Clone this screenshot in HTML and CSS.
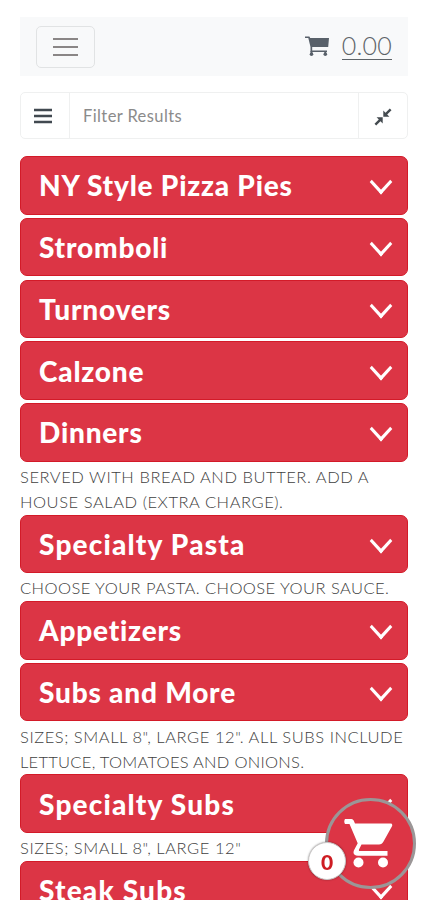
FILE: index.html
```html
<!DOCTYPE html>
<html lang="en">
<head>
  <meta charset="UTF-8" />
  <meta name="viewport" content="width=device-width, initial-scale=1.0"/>
  <title>Menu</title>
  <link rel="stylesheet" href="styles.css">
</head>
<body>

  <!-- Top bar -->
  <header class="navbar">
    <button class="toggler" aria-label="Menu">
      <svg width="25" height="20" viewBox="0 0 25 20"><path d="M0 2h25M0 10h25M0 18h25" stroke="#8a8686" stroke-width="2" /></svg>
    </button>
    <a class="total" href="#">
      <svg width="24" height="21" viewBox="0 0 24 21" fill="#59616a">
        <path d="M0 .5h4.400l.8 1.500H24l-.8 9H7.200v3.500H22V16H5.500V11L3.300 2H0z"/>
        <circle cx="6.500" cy="18.300" r="1.800"/><circle cx="20.300" cy="18.300" r="1.800"/>
        <path d="M5.500 15h2v3h-2zM19.300 15h2v3h-2z"/>
      </svg>
      <span>0.00</span>
    </a>
  </header>

  <!-- Filter -->
  <div class="filter">
    <button class="filter-btn" aria-label="Categories">
      <svg width="18" height="16" viewBox="0 0 18 16"><path d="M0 2h18M0 8h18M0 14h18" stroke="#414950" stroke-width="2.500"/></svg>
    </button>
    <input type="text" placeholder="Filter Results">
    <button class="filter-btn collapse" aria-label="Collapse">
      <svg width="18" height="18" viewBox="0 0 18 18" fill="#444b50">
        <path d="M9.300 2.600v6.100h6.100l-2.200-2.200 4.300-4.300L15.800.5l-4.300 4.300zM8.700 15.400V9.300H2.600l2.200 2.200-4.300 4.300 1.700 1.700 4.300-4.300z"/>
      </svg>
    </button>
  </div>

  <!-- Categories -->
  <main class="menu">
    <button class="category"><span>NY Style Pizza Pies</span><i class="chevron"></i></button>
    <button class="category"><span>Stromboli</span><i class="chevron"></i></button>
    <button class="category"><span>Turnovers</span><i class="chevron"></i></button>
    <button class="category"><span>Calzone</span><i class="chevron"></i></button>
    <button class="category"><span>Dinners</span><i class="chevron"></i></button>
    <p>SERVED WITH BREAD AND BUTTER. ADD A<br>HOUSE SALAD (EXTRA CHARGE).</p>
    <button class="category wide"><span>Specialty Pasta</span><i class="chevron"></i></button>
    <p><span class="snug">CHOOSE YOUR PASTA. CHOOSE YOUR SAUCE.</span></p>
    <button class="category"><span>Appetizers</span><i class="chevron"></i></button>
    <button class="category"><span>Subs and More</span><i class="chevron"></i></button>
    <p>SIZES; SMALL 8", LARGE 12". ALL SUBS INCLUDE<br><span class="tight">LETTUCE, TOMATOES AND ONIONS.</span></p>
    <button class="category wide"><span>Specialty Subs</span><i class="chevron"></i></button>
    <p>SIZES; SMALL 8", LARGE 12"</p>
    <button class="category wide"><span>Steak Subs</span><i class="chevron"></i></button>
  </main>

  <!-- Floating cart -->
  <a class="cart" href="#" aria-label="Cart">
    <svg width="49" height="49" viewBox="0 0 49 49" fill="#fff">
      <path fill-rule="evenodd" d="M1 0h6.500q1.500 0 2.200 1.500L11 4.500h35.500q2.500 0 1.500 2.700L39.500 22.500q-1.500 3-4.500 3H17.500L15 30.500q-.5 1.500 1 1.500H43.500v4.700H14q-6-.5-4-5.500l3.700-7L5.500 5H1Q-.5 2.500 1 0z"/>
      <circle cx="14.500" cy="43.500" r="5"/><circle cx="39" cy="43.500" r="5"/>
    </svg>
    <span class="badge">0</span>
  </a>

</body>
</html>
```
FILE: styles.css
```css
* {
  box-sizing: border-box;
}

body {
  margin: 0;
  padding: 17px 19px 0 20px;
  height: 900px;
  overflow: hidden;
  background: #fff;
  font-family: Lato, "Open Sans", sans-serif;
}

button {
  font-family: inherit;
  cursor: pointer;
}

.navbar {
  display: flex;
  align-items: center;
  justify-content: space-between;
  height: 59px;
  padding: 0 16px;
  background: #f8f9fa;
}

.toggler {
  display: flex;
  align-items: center;
  justify-content: center;
  width: 59px;
  height: 42px;
  padding: 0;
  border: 1px solid #e1e3e4;
  border-radius: 5px;
  background: transparent;
}

.total {
  display: flex;
  align-items: center;
  gap: 13px;
  color: #5d6368;
  font-size: 25px;
  font-weight: 300;
  text-decoration: none;
}

.total span {
  height: 25px;
  line-height: 21px;
  margin-top: 1px;
  letter-spacing: 0.2px;
  border-bottom: 1px solid #5d6368;
}

.filter {
  display: flex;
  height: 47px;
  margin-top: 16px;
  border: 1px solid #eff0f0;
  border-radius: 5px;
}

.filter-btn {
  display: flex;
  align-items: center;
  justify-content: center;
  width: 49px;
  padding: 0 4px 0 0;
  border: 0;
  border-right: 1px solid #eff0f0;
  background: transparent;
}

.filter-btn.collapse {
  padding: 3px 0 0;
  border-right: 0;
  border-left: 1px solid #eff0f0;
}

.filter input {
  flex: 1;
  min-width: 0;
  padding: 0 13px;
  border: 0;
  background: transparent;
  font-family: inherit;
  font-size: 16.5px;
  letter-spacing: 0.4px;
}

.filter input::placeholder {
  color: #8b8b8b;
}

.menu {
  margin-top: 17px;
}

.category {
  display: flex;
  align-items: center;
  justify-content: space-between;
  width: 100%;
  height: 58.5px;
  margin: 0 0 3.3px;
  padding: 0 18px;
  border: 1px solid #d31a28;
  border-radius: 7px;
  background: #dc3545;
  color: #fff;
  font-size: 28px;
  font-weight: 900;
  letter-spacing: 0.8px;
}

.category.wide {
  letter-spacing: 1.2px;
}

.chevron {
  width: 16px;
  height: 16px;
  margin: -6px 0 0;
  border-right: 3px solid #fff;
  border-bottom: 3px solid #fff;
  transform: scaleY(1.1) rotate(45deg);
}

.menu p {
  margin: 0;
  color: #3f3f3f;
  font-size: 16.5px;
  font-weight: 300;
  line-height: 24.8px;
  letter-spacing: 0.55px;
  white-space: nowrap;
}

.menu p .snug {
  letter-spacing: 0.43px;
}

.menu p .tight {
  letter-spacing: 0.27px;
}

.cart {
  position: fixed;
  left: 325px;
  top: 798px;
  display: flex;
  align-items: center;
  justify-content: center;
  width: 91px;
  height: 91px;
  padding-right: 4px;
  border: 3px solid #9b9697;
  border-radius: 50%;
  background: #dc3545;
}

.badge {
  position: absolute;
  left: -20px;
  top: 41px;
  width: 38px;
  height: 38px;
  border: 1px solid #c9c6c6;
  border-radius: 50%;
  background: #fff;
  color: #ce1c22;
  font-size: 21px;
  font-weight: 900;
  line-height: 38px;
  text-align: center;
  box-shadow: 0 0 2px rgba(0,0,0,0.4);
}
```
